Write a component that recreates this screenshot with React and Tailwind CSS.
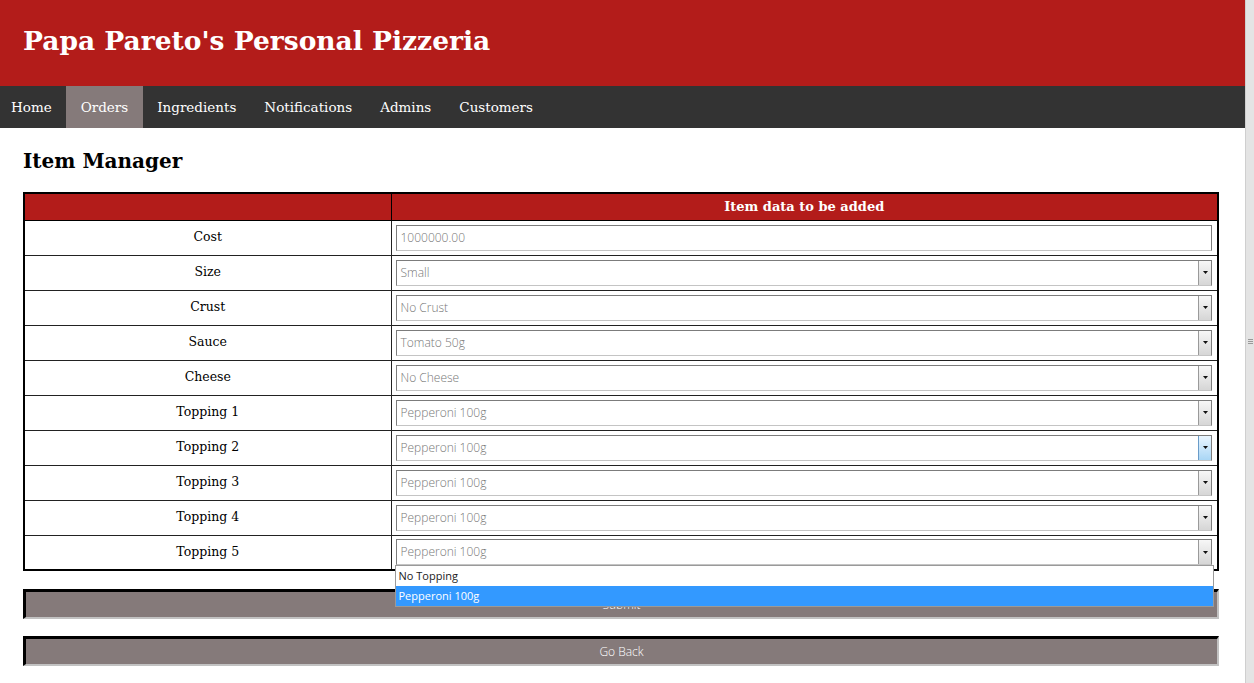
import React from "react";

const serif = { fontFamily: '"DejaVu Serif", Georgia, serif' };
const thin = { fontFamily: '"Open Sans", "DejaVu Sans", sans-serif' };

const navItems = ["Home", "Orders", "Ingredients", "Notifications", "Admins", "Customers"];

const rows = [
  { label: "Cost", value: "1000000.00", input: true },
  { label: "Size", value: "Small" },
  { label: "Crust", value: "No Crust" },
  { label: "Sauce", value: "Tomato 50g" },
  { label: "Cheese", value: "No Cheese" },
  { label: "Topping 1", value: "Pepperoni 100g" },
  { label: "Topping 2", value: "Pepperoni 100g", hover: true },
  { label: "Topping 3", value: "Pepperoni 100g" },
  { label: "Topping 4", value: "Pepperoni 100g" },
  { label: "Topping 5", value: "Pepperoni 100g", open: true },
];

function FakeSelect({ value, input, hover, open }) {
  return (
    <div className="relative">
      <div className="flex h-[26px] border border-[#7c7c7c] border-b-[#c4c4c4] bg-white">
        <div className="flex-1 flex items-center pl-[4px] text-[12px] font-light text-[#777]" style={thin}>
          {value}
        </div>
        {!input && (
          <div
            className={
              hover
                ? "w-[13px] flex items-center justify-center border-l border-[#6a9cc9] bg-gradient-to-b from-[#eaf6ff] to-[#a9d6f5]"
                : "w-[13px] flex items-center justify-center border-l border-[#9a9a9a] bg-gradient-to-b from-[#f7f7f7] to-[#d6d6d6]"
            }
          >
            <svg width="5" height="3" viewBox="0 0 5 3">
              <path d="M0 0h5L2.5 3z" fill="#111" />
            </svg>
          </div>
        )}
      </div>
      {open && (
        <div className="absolute left-[-1px] top-full z-10 w-[819px] border border-[#9a9a9a] bg-white text-[11px]" style={thin}>
          <div className="h-[20px] flex items-center pl-[3px] text-[#222]">No Topping</div>
          <div className="h-[20px] flex items-center pl-[3px] bg-[#3399ff] text-white">Pepperoni 100g</div>
        </div>
      )}
    </div>
  );
}

function GrayButton({ children }) {
  return (
    <button
      className="w-[1196px] h-[30px] bg-[#857a7a] border-t-[3px] border-l-[3px] border-t-black border-l-black border-b-2 border-r-2 border-b-[#c2c2c2] border-r-[#c2c2c2] text-white text-[12px] font-light"
      style={thin}
    >
      {children}
    </button>
  );
}

export default function App() {
  return (
    <div className="flex h-[683px] overflow-hidden bg-white">
      <div className="flex-1">
        <div className="h-[86px] bg-[#b31c1a] flex items-center px-[23px] pb-[4px]">
          <h1 className="text-[26.5px] font-bold text-white" style={serif}>
            Papa Pareto's Personal Pizzeria
          </h1>
        </div>
        <nav className="h-[42px] bg-[#333333] flex" style={serif}>
          {navItems.map((item) => (
            <div
              key={item}
              className={
                item === "Orders"
                  ? "h-full flex items-center px-[15px] bg-[#857a7a] text-white text-[13.5px]"
                  : item === "Home"
                  ? "h-full flex items-center pl-[11px] pr-[14px] text-white text-[13.5px]"
                  : "h-full flex items-center px-[14px] text-white text-[13.5px]"
              }
            >
              {item}
            </div>
          ))}
        </nav>

        <div className="px-[23px]">
          <h2 className="mt-[20px] mb-[17px] text-[20px] leading-[27px] font-bold text-black" style={serif}>
            Item Manager
          </h2>

          <table className="w-[1196px] border-collapse border-2 border-black" style={serif}>
            <thead>
              <tr className="h-[27px] bg-[#b31c1a]">
                <th className="w-[367px] border border-black"></th>
                <th className="border border-black text-white text-[13px] font-bold">Item data to be added</th>
              </tr>
            </thead>
            <tbody>
              {rows.map((r) => (
                <tr key={r.label} className="h-[35px]">
                  <td className="border border-[#222] text-center text-[12.5px] text-black">{r.label}</td>
                  <td className="border border-[#222] pl-[4px] pr-[5px]">
                    <FakeSelect {...r} />
                  </td>
                </tr>
              ))}
            </tbody>
          </table>

          <div className="mt-[18px]">
            <GrayButton>Submit</GrayButton>
          </div>
          <div className="mt-[17px]">
            <GrayButton>Go Back</GrayButton>
          </div>
        </div>
      </div>

      <div className="w-[9px] bg-[#e4e4e4] border-l border-[#cfcfcf] flex flex-col items-center justify-center">
        <div className="w-[5px] flex flex-col gap-[1px]">
          <div className="h-px bg-[#999]" />
          <div className="h-px bg-[#999]" />
          <div className="h-px bg-[#999]" />
        </div>
      </div>
    </div>
  );
}
